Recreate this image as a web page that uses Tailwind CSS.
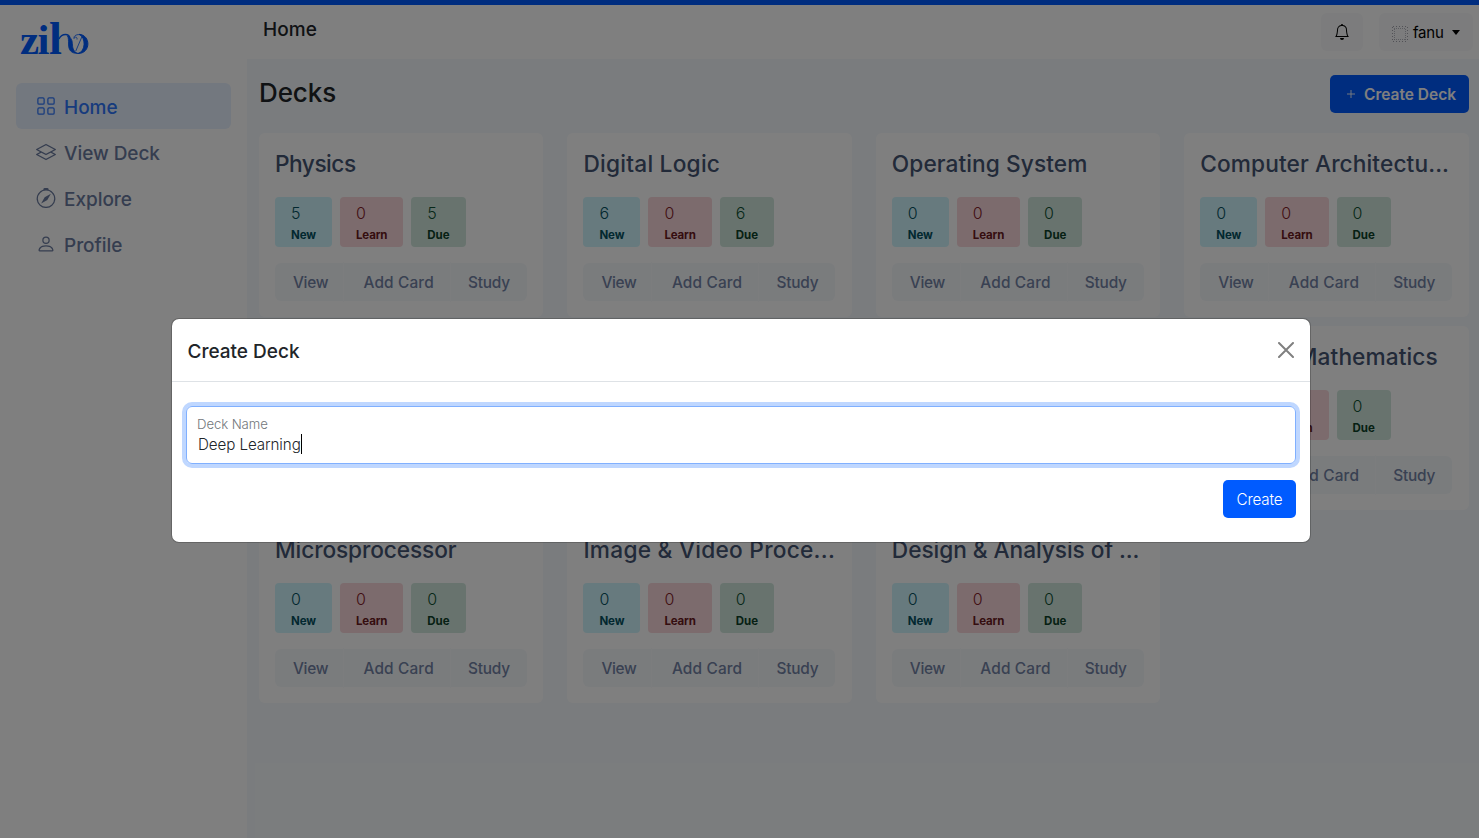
<!DOCTYPE html>
<html lang="en">
<head>
<meta charset="utf-8">
<title>Home</title>
<script src="https://cdn.jsdelivr.net/npm/@tailwindcss/browser@4"></script>
</head>
<body class="relative h-[838px] w-[1479px] overflow-hidden bg-[#f5f9fc] font-['Inter',sans-serif] text-[#212529]">
<div class="flex h-full flex-col">
  <div class="h-[5px] shrink-0 bg-[#005bff]"></div>
  <div class="flex min-h-0 flex-1">
    <aside class="flex w-[247px] shrink-0 flex-col bg-white px-4">
      <svg class="mt-1 ml-1 h-[56px] w-[72px] shrink-0 overflow-visible" viewBox="20 9 72 56" fill="none">
        <text y="53.5" font-family="Liberation Serif" font-weight="700" font-size="43" fill="#005bff"><tspan x="20">z</tspan><tspan x="37.500">i</tspan><tspan x="49" font-size="46.500">l</tspan></text>
        <g stroke="#005bff">
          <path d="M59 39C60.500 35.800 63 34.500 65.500 34.500C68 34.500 69.500 36 70 38" stroke-width="1.300"/>
          <path d="M67.500 36C72 38 72.300 41 72.500 45C72.700 49 74 52 78 53.500C71 53.500 68.500 50 68.500 44C68.500 40 68.500 38 67.500 36Z" fill="#005bff" stroke-width=".8"/>
          <path d="M79 34.300C91 35 91 53.500 78 53.500C86 51.500 86 37 79 34.300Z" fill="#005bff" stroke-width="1"/>
          <path d="M74 38.500C73.500 35.500 77 34 81 34.800M82 36.500L75.800 51M74 38.500C75 36 77.500 37 77 39.500" stroke-width=".8"/>
        </g>
      </svg>
      <nav class="mt-[18px] flex flex-col text-[19px] font-[450] text-[#6b7b9f]">
        <a class="flex h-[46px] items-center gap-2 rounded-md bg-[#e6f0ff] pl-5 text-[#2f76fa]">
          <svg class="size-5" viewBox="0 0 16 16" fill="none" stroke="currentColor"><rect x="1.500" y="1.500" width="5" height="5" rx="1"/><rect x="9.500" y="1.500" width="5" height="5" rx="1"/><rect x="1.500" y="9.500" width="5" height="5" rx="1"/><rect x="9.500" y="9.500" width="5" height="5" rx="1"/></svg>
          <span class="pt-1">Home</span>
        </a>
        <a class="flex h-[46px] items-center gap-2 pl-5">
          <svg class="size-5" viewBox="0 0 16 16" fill="currentColor"><path d="M8.235 1.559a.5.5 0 0 0-.47 0l-7.500 4a.5.5 0 0 0 0 .882L3.188 8 .264 9.559a.5.5 0 0 0 0 .882l7.500 4a.5.5 0 0 0 .47 0l7.500-4a.5.5 0 0 0 0-.882L12.813 8l2.922-1.559a.5.5 0 0 0 0-.882l-7.500-4zm3.515 7.008L14.438 10 8 13.433 1.562 10 4.250 8.567l3.515 1.874a.5.5 0 0 0 .47 0l3.515-1.874zM8 9.433 1.562 6 8 2.567 14.438 6 8 9.433z"/></svg>
          <span class="pt-1 tracking-[-0.05px]">View Deck</span>
        </a>
        <a class="flex h-[46px] items-center gap-2 pl-5">
          <svg class="size-5" viewBox="0 0 16 16" fill="currentColor"><path d="M8 16.016a7.500 7.500 0 0 0 1.962-14.740A1 1 0 0 0 9 0H7a1 1 0 0 0-.962 1.276A7.500 7.500 0 0 0 8 16.016zm6.500-7.500a6.500 6.500 0 1 1-13 0 6.500 6.500 0 0 1 13 0z"/><path d="m6.940 7.440 4.950-2.830-2.830 4.950-4.949 2.830 2.828-4.950z"/></svg>
          <span class="pt-1 tracking-[-0.05px]">Explore</span>
        </a>
        <a class="flex h-[46px] items-center gap-2 pl-5">
          <svg class="size-5" viewBox="0 0 16 16" fill="currentColor"><path d="M8 8a3 3 0 1 0 0-6 3 3 0 0 0 0 6zm2-3a2 2 0 1 1-4 0 2 2 0 0 1 4 0zm4 8c0 1-1 1-1 1H3s-1 0-1-1 1-4 6-4 6 3 6 4zm-1-.004c-.001-.246-.154-.986-.832-1.664C11.516 10.680 10.289 10 8 10c-2.290 0-3.516.68-4.168 1.332-.678.678-.83 1.418-.832 1.664h10z"/></svg>
          <span class="pt-1 tracking-[-0.05px]">Profile</span>
        </a>
      </nav>
    </aside>
    <main class="flex min-w-0 flex-1 flex-col">
      <header class="flex h-[54px] shrink-0 items-start bg-white pr-1.5 pl-4">
        <h1 class="mt-[11px] flex-1 text-[19px] leading-7 font-[450] tracking-[0.05px]">Home</h1>
        <button class="mt-2 flex h-[38px] w-[42px] items-center justify-center rounded-md bg-[#f8f9fa]">
          <svg class="size-4" viewBox="0 0 16 16" fill="#000"><path d="M8 16a2 2 0 0 0 2-2H6a2 2 0 0 0 2 2zM8 1.918l-.797.161A4.002 4.002 0 0 0 4 6c0 .628-.134 2.197-.459 3.742-.16.767-.376 1.566-.663 2.258h10.244c-.287-.692-.502-1.490-.663-2.258C12.134 8.197 12 6.628 12 6a4.002 4.002 0 0 0-3.203-3.920L8 1.917zM14.220 12c.223.447.481.801.78 1H1c.299-.199.557-.553.78-1C2.680 10.200 3 6.880 3 6c0-2.420 1.720-4.440 4.005-4.901a1 1 0 1 1 1.990 0A5.002 5.002 0 0 1 13 6c0 .88.32 4.200 1.220 6z"/></svg>
        </button>
        <button class="mt-2 ml-4 flex h-[38px] w-[94px] items-center rounded-md bg-[#f8f9fa] pl-[13px] text-[15px] text-black">
          <svg class="mt-1 size-4" viewBox="0 0 16 16" fill="none" stroke="#a2a2ac"><path d="M1 .5H16M1 15.500H16M.5 1V16M15.500 1V16" stroke-dasharray="1 2"/><path d="M2 2.500H14M2 13.500H14M2.500 3V14M13.500 3V14" stroke-dasharray="1 1" stroke-opacity=".75"/></svg>
          <span class="ml-[5px] pt-0.5 tracking-[-0.2px]">fanu</span>
          <span class="ml-2 border-x-[4.500px] border-t-[5px] border-x-transparent border-t-black"></span>
        </button>
      </header>
      <div class="flex items-start justify-between pt-4 pr-2.5 pl-3">
        <h2 class="text-[26px] leading-9 font-[450] tracking-[-0.1px]">Decks</h2>
        <button class="flex h-[38px] w-[139px] items-center rounded-[5px] bg-[#005bff] pl-[17px] text-[15.500px] font-semibold text-white">
          <svg class="mr-[9px] size-2" viewBox="0 0 8 8" stroke="#fff" stroke-width=".9"><path d="M4 0V8M0 4H8"/></svg><span class="pt-0.5">Create Deck</span>
        </button>
      </div>
      <div id="decks" class="mt-[19.500px] grid grid-cols-4 gap-x-6 gap-y-[8.500px] pr-[10.300px] pl-3"></div>
    </main>
  </div>
</div>

<template id="deck">
  <section class="h-[184.500px] min-w-0 rounded-md bg-white px-4 pt-4">
    <h3 class="h-[30px] whitespace-nowrap text-[22.700px] leading-[30px] font-[550] text-[#445472]"></h3>
    <div class="mt-[18.500px] flex gap-2 text-base">
      <div class="h-[50px] w-[57px] rounded bg-[#cff4fc] pl-4 text-[#055160]"><p class="n h-[27px] pt-1 leading-6 font-light"></p><p class="text-[11.500px] leading-[22px] font-bold tracking-[-0.1px]">New</p></div>
      <div class="h-[50px] w-[63.250px] rounded bg-[#f8d7da] pl-4 text-[#842029]"><p class="n h-[27px] pt-1 leading-6 font-light"></p><p class="text-[11.500px] leading-[22px] font-bold tracking-[-0.15px] text-[#6a1a21]">Learn</p></div>
      <div class="h-[50px] w-[54.250px] rounded bg-[#d1e7dd] pl-4 text-[#0f5132]"><p class="n h-[27px] pt-1 leading-6 font-light"></p><p class="text-[11.500px] leading-[22px] font-bold text-[#0c4128]">Due</p></div>
    </div>
    <div class="mt-4 flex h-[38px] w-[252px] items-center rounded-md bg-[#f5f8fb] text-[15.400px] leading-[38px] font-[450] text-[#7282a5]">
      <span class="w-[69px] border-r border-[#f8fafd] pt-0.5 pl-[18px] tracking-[-0.3px]">View</span>
      <span class="w-[107px] border-r border-[#f8fafd] pt-0.5 pl-[19.500px] tracking-[0.15px]">Add Card</span>
      <span class="pt-0.5 pl-[17px] tracking-[-0.2px]">Study</span>
    </div>
  </section>
</template>
<script>
  const decks = [
    ['Physics', 5, 0, 5, -0.5], ['Digital Logic', 6, 0, 6, 0.23], ['Operating System', 0, 0, 0, 0.07], ['Computer Architectu...', 0, 0, 0, 0.1],
    ['', 0, 0, 0, 0], ['', 0, 0, 0, 0], ['', 0, 0, 0, 0], ['Discrete Mathematics', 0, 0, 0, 0.07],
    ['Microsprocessor', 0, 0, 0, -0.12], ['Image & Video Proce...', 0, 0, 0, 0.25], ['Design & Analysis of ...', 0, 0, 0, -0.06]
  ];
  const grid = document.getElementById('decks'), tpl = document.getElementById('deck');
  for (const [title, fresh, learn, due, tracking] of decks) {
    const card = tpl.content.cloneNode(true);
    const h = card.querySelector('h3');
    h.textContent = title;
    h.style.letterSpacing = tracking + 'px';
    card.querySelectorAll('.n').forEach((el, i) => el.textContent = [fresh, learn, due][i]);
    grid.append(card);
  }
</script>

<div class="absolute inset-0 bg-black/50"></div>
<div class="absolute top-[318px] left-[171px] flex h-[225px] w-[1140px] flex-col rounded-lg border border-black/20 bg-white bg-clip-padding">
  <div class="flex h-[63px] shrink-0 items-center justify-between border-b border-[#dee2e6] pr-4 pl-[15.500px]">
    <h2 class="pt-1 text-[19px] font-[450]">Create Deck</h2>
    <svg class="size-4" viewBox="0 0 16 16" stroke="#808080" stroke-width="2" stroke-linecap="round"><path d="M1 1L15 15M15 1L1 15"/></svg>
  </div>
  <div class="mx-3.5 mt-6 flex h-[58px] shrink-0 flex-col rounded-md border border-[#80b0ff] pl-2.5 ring-4 ring-[#bfd7ff]">
    <label class="mt-[7px] text-[13.200px] leading-5 font-light tracking-[-0.1px] text-[#73777b]">Deck Name</label>
    <div class="-mt-px flex items-center pl-px"><span class="pt-0.5 text-[15.200px] leading-[20px] font-light tracking-[-0.1px] text-[#212529]">Deep Learning</span><span class="h-5 w-px bg-black"></span></div>
  </div>
  <button class="mt-4 mr-3.5 flex h-[38px] w-[73px] items-center justify-center self-end rounded-[5px] bg-[#005bff] pt-0.5 text-[15.200px] font-light tracking-[-0.15px] text-white">Create</button>
</div>
</body>
</html>
